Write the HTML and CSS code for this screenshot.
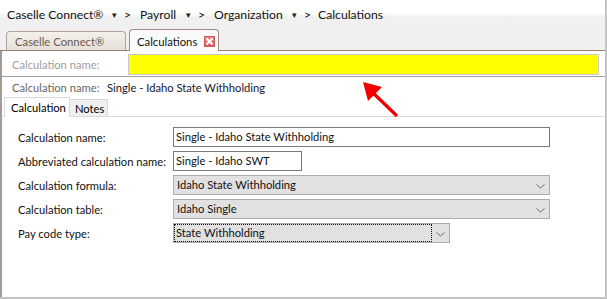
FILE: index.html
```html
<!DOCTYPE html>
<html>
<head>
<meta charset="utf-8">
<link rel="stylesheet" href="styles.css">
</head>
<body>
<div class="app">
  <div class="header">
    <div class="crumbs">
      <span class="crumb c1">Caselle Connect®</span><span class="drop">▾</span><span class="sep">&gt;</span>
      <span class="crumb c2">Payroll</span><span class="drop">▾</span><span class="sep">&gt;</span>
      <span class="crumb c3">Organization</span><span class="drop">▾</span><span class="sep last">&gt;</span>
      <span class="crumb">Calculations</span>
    </div>
    <div class="tabs">
      <div class="tab">Caselle Connect®</div>
      <div class="tab active"><span class="tab-text">Calculations</span><span class="close"><svg width="9" height="9" viewBox="0 0 9 9"><path d="M1.5 1.5 L7.5 7.5 M7.5 1.5 L1.5 7.5" stroke="#fff" stroke-width="2"/></svg></span></div>
    </div>
  </div>
  <div class="content">
    <div class="search">
      <span class="search-label">Calculation name:</span>
      <div class="search-field"></div>
    </div>
    <div class="info">
      <span class="info-label">Calculation name:</span>
      <span class="info-value">Single - Idaho State Withholding</span>
    </div>
    <div class="subtabs">
      <div class="subtab active">Calculation</div>
      <div class="subtab">Notes</div>
    </div>
    <div class="form">
      <div class="row">
        <label class="lbl">Calculation name:</label>
        <div class="input wide">Single - Idaho State Withholding</div>
      </div>
      <div class="row">
        <label class="lbl">Abbreviated calculation name:</label>
        <div class="input short">Single - Idaho SWT</div>
      </div>
      <div class="row">
        <label class="lbl">Calculation formula:</label>
        <div class="select wide"><span class="val">Idaho State Withholding</span><svg class="chev" width="9" height="5" viewBox="0 0 9 5"><polyline points="0.5,0.5 4.5,4 8.5,0.5" fill="none" stroke="#6a6a6a" stroke-width="1"/></svg></div>
      </div>
      <div class="row">
        <label class="lbl">Calculation table:</label>
        <div class="select wide"><span class="val">Idaho Single</span><svg class="chev" width="9" height="5" viewBox="0 0 9 5"><polyline points="0.5,0.5 4.5,4 8.5,0.5" fill="none" stroke="#6a6a6a" stroke-width="1"/></svg></div>
      </div>
      <div class="row">
        <label class="lbl">Pay code type:</label>
        <div class="select mid"><span class="val focus">State Withholding</span><svg class="chev" width="9" height="5" viewBox="0 0 9 5"><polyline points="0.5,0.5 4.5,4 8.5,0.5" fill="none" stroke="#6a6a6a" stroke-width="1"/></svg></div>
      </div>
    </div>
  </div>
  <svg class="arrow" width="50" height="45" viewBox="0 0 50 45">
    <line x1="44" y1="41" x2="16" y2="14" stroke="#f20000" stroke-width="3.2"/>
    <polygon points="10,7 29,12 15,26" fill="#f20000"/>
  </svg>
</div>
</body>
</html>
```
FILE: styles.css
```css
* { box-sizing: border-box; }
html, body { margin: 0; padding: 0; }
body {
  width: 607px;
  height: 299px;
  overflow: hidden;
  background: #fff;
  font-family: Lato, "Liberation Sans", Arial, sans-serif;
  color: #000;
}
.app {
  position: relative;
  width: 607px;
  height: 299px;
  border-right: 2px solid #c3c3c3;
  border-bottom: 2px solid #c3c3c3;
  display: flex;
  flex-direction: column;
}
.header {
  background: linear-gradient(#ffffff 0, #ffffff 13px, #f0f0f0 17px, #f0f0f0 100%);
  border-bottom: 1px solid #9d7f70;
}
.crumbs {
  height: 29px;
  padding: 6px 0 0 7px;
  font-size: 12.2px;
  line-height: 17px;
  color: #111;
  white-space: nowrap;
  display: flex;
}
.crumb { flex-shrink: 0; }
.c1 { width: 105px; }
.c2 { width: 46px; }
.c3 { width: 78px; }
.drop { font-size: 9px; width: 12px; color: #222; flex-shrink: 0; }
.sep { width: 16px; flex-shrink: 0; }
.sep.last { width: 14px; }
.tabs {
  height: 21px;
  display: flex;
  align-items: flex-end;
  padding-left: 6px;
  gap: 3px;
}
.tab {
  height: 19px;
  width: 120px;
  padding: 2px 0 0 8px;
  font-size: 11.3px;
  line-height: 15px;
  color: #6b5a50;
  border: 1px solid #b4a298;
  border-bottom: none;
  border-radius: 4px 4px 0 0;
  background: linear-gradient(#f4f0ea, #e6e0d8);
  white-space: nowrap;
  flex-shrink: 0;
}
.tab.active {
  height: 22px;
  width: 90px;
  margin-bottom: -1px;
  padding: 4px 0 0 7px;
  color: #111;
  background: linear-gradient(#f8f8f8, #ffffff);
  border-color: #a08e84;
  display: flex;
  align-items: flex-start;
}
.tab-text { width: 67px; }
.close {
  width: 11px;
  height: 11px;
  margin-top: 2px;
  background: linear-gradient(#ef8a8a, #e05454);
  border: 1px solid #c95a5a;
  display: flex;
  align-items: center;
  justify-content: center;
  flex-shrink: 0;
}
.content {
  flex: 1;
  border-left: 2px solid #a69a92;
  display: flex;
  flex-direction: column;
}
.search {
  height: 26px;
  display: flex;
  align-items: center;
  border-bottom: 1px solid #a0a0a0;
  padding-left: 10px;
  padding-top: 1px;
}
.search-label {
  width: 116px;
  flex-shrink: 0;
  font-size: 11.2px;
  color: #a0a0a0;
  white-space: nowrap;
}
.search-field {
  width: 471px;
  height: 21px;
  border: 1px solid #c8c8c8;
  background: #ffff00;
  box-shadow: inset -1px 0 0 #fff;
}
.info {
  height: 20px;
  display: flex;
  align-items: center;
  padding-left: 10px;
  font-size: 11.2px;
  padding-top: 1px;
  white-space: nowrap;
}
.info-label { width: 95px; flex-shrink: 0; color: #666; }
.info-value { color: #15152a; }
.subtabs {
  height: 20px;
  display: flex;
  align-items: flex-end;
  padding-left: 2px;
  border-bottom: 1px solid #d9d9d9;
  font-size: 11.2px;
}
.subtab {
  height: 17px;
  width: 38px;
  padding: 2px 0 0 5px;
  background: #f0f0f0;
  border: 1px solid #d9d9d9;
  border-bottom: none;
  border-left: none;
  white-space: nowrap;
}
.subtab.active {
  height: 20px;
  width: 66px;
  margin-bottom: -1px;
  padding: 3px 0 0 6px;
  background: #fff;
  border-left: 1px solid #d9d9d9;
}
.form {
  padding: 10px 0 0 16px;
  display: flex;
  flex-direction: column;
  gap: 4px;
  font-size: 11.2px;
}
.row {
  height: 20px;
  display: flex;
  align-items: center;
}
.lbl { width: 155px; flex-shrink: 0; color: #111; white-space: nowrap; }
.input {
  height: 20px;
  border: 1px solid #7a7a7a;
  padding: 0 0 0 2px;
  line-height: 18px;
  color: #111;
  white-space: nowrap;
  flex-shrink: 0;
}
.wide { width: 377px; }
.short { width: 129px; }
.mid { width: 277px; }
.select {
  height: 20px;
  border: 1px solid #adadad;
  background: #e1e1e1;
  display: flex;
  align-items: center;
  padding-left: 3px;
  position: relative;
  color: #111;
  flex-shrink: 0;
  white-space: nowrap;
}
.val { flex: 1; line-height: 16px; }
.val.focus {
  flex: none;
  width: 256px;
  height: 16px;
  margin-left: -2px;
  padding-left: 1px;
  outline: 1px dotted #111;
}
.chev { position: absolute; right: 4px; top: 8px; }
.arrow {
  position: absolute;
  left: 353px;
  top: 75px;
}
```
